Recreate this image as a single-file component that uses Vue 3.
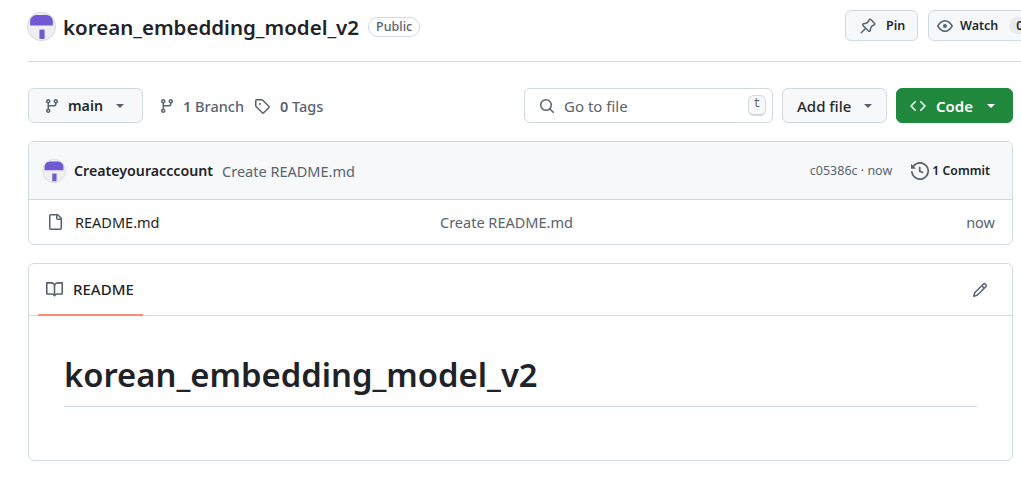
<script setup>
const title = 'korean_embedding_model_v2'

const icons = {
  pin: 'm11.294.984 3.722 3.722a1.75 1.75 0 0 1-.504 2.826l-1.327.613a3.089 3.089 0 0 0-1.707 2.084l-.584 2.454c-.317 1.332-1.972 1.8-2.94.832L5.75 11.311 1.78 15.28a.749.749 0 0 1-1.275-.326.749.749 0 0 1 .215-.734L4.69 10.25l-2.204-2.204c-.968-.968-.5-2.623.832-2.94l2.454-.584a3.08 3.08 0 0 0 2.084-1.707l.613-1.327a1.75 1.75 0 0 1 2.826-.504ZM6.283 9.723l2.732 2.731a.25.25 0 0 0 .42-.119l.584-2.454a4.586 4.586 0 0 1 2.537-3.098l1.328-.613a.25.25 0 0 0 .072-.404l-3.722-3.722a.25.25 0 0 0-.404.072l-.613 1.328a4.584 4.584 0 0 1-3.098 2.537l-2.454.584a.25.25 0 0 0-.119.42l2.731 2.732Z',
  eye: 'M8 2c1.981 0 3.671.992 4.933 2.078 1.27 1.091 2.187 2.345 2.637 3.023a1.62 1.62 0 0 1 0 1.798c-.45.678-1.367 1.932-2.637 3.023C11.67 13.008 9.981 14 8 14c-1.981 0-3.671-.992-4.933-2.078C1.797 10.83.88 9.576.43 8.898a1.62 1.62 0 0 1 0-1.798c.45-.677 1.367-1.931 2.637-3.022C4.33 2.992 6.019 2 8 2ZM1.679 7.932a.12.12 0 0 0 0 .136c.411.622 1.241 1.75 2.366 2.717C5.176 11.758 6.527 12.5 8 12.5c1.473 0 2.825-.742 3.955-1.715 1.124-.967 1.954-2.096 2.366-2.717a.12.12 0 0 0 0-.136c-.412-.621-1.242-1.75-2.366-2.717C10.824 4.242 9.473 3.5 8 3.5c-1.473 0-2.825.742-3.955 1.715-1.124.967-1.954 2.096-2.366 2.717ZM8 10a2 2 0 1 1-.001-3.999A2 2 0 0 1 8 10Z',
  branch: 'M9.5 3.25a2.25 2.25 0 1 1 3 2.122V6A2.5 2.5 0 0 1 10 8.5H6a1 1 0 0 0-1 1v1.128a2.251 2.251 0 1 1-1.5 0V5.372a2.25 2.25 0 1 1 1.5 0v1.836A2.493 2.493 0 0 1 6 7h4a1 1 0 0 0 1-1v-.628A2.25 2.25 0 0 1 9.5 3.25Zm-6 0a.75.75 0 1 0 1.5 0 .75.75 0 0 0-1.5 0Zm8.25-.75a.75.75 0 1 0 0 1.5.75.75 0 0 0 0-1.5ZM4.25 12a.75.75 0 1 0 0 1.5.75.75 0 0 0 0-1.5Z',
  tag: 'M1 7.775V2.75C1 1.784 1.784 1 2.75 1h5.025c.464 0 .91.184 1.238.513l6.25 6.25a1.75 1.75 0 0 1 0 2.474l-5.026 5.026a1.75 1.75 0 0 1-2.474 0l-6.25-6.25A1.752 1.752 0 0 1 1 7.775Zm1.5 0c0 .066.026.13.073.177l6.25 6.25a.25.25 0 0 0 .354 0l5.025-5.025a.25.25 0 0 0 0-.354l-6.25-6.25a.25.25 0 0 0-.177-.073H2.75a.25.25 0 0 0-.25.25ZM6 5a1 1 0 1 1 0 2 1 1 0 0 1 0-2Z',
  search: 'M10.68 11.74a6 6 0 0 1-7.922-8.982 6 6 0 0 1 8.982 7.922l3.04 3.04a.749.749 0 0 1-.326 1.275.749.749 0 0 1-.734-.215ZM11.5 7a4.499 4.499 0 1 0-8.997 0A4.499 4.499 0 0 0 11.5 7Z',
  code: 'm11.28 3.22 4.25 4.25a.75.75 0 0 1 0 1.06l-4.25 4.25a.749.749 0 0 1-1.275-.326.749.749 0 0 1 .215-.734L13.94 8l-3.72-3.72a.749.749 0 0 1 .326-1.275.749.749 0 0 1 .734.215Zm-6.56 0a.751.751 0 0 1 1.042.018.751.751 0 0 1 .018 1.042L2.06 8l3.72 3.72a.749.749 0 0 1-.326 1.275.749.749 0 0 1-.734-.215L.47 8.53a.75.75 0 0 1 0-1.06Z',
  history: 'm.427 1.927 1.215 1.215a8.002 8.002 0 1 1-1.6 5.685.75.75 0 1 1 1.493-.154 6.5 6.5 0 1 0 1.18-4.458l1.358 1.358A.25.25 0 0 1 3.896 6H.25A.25.25 0 0 1 0 5.75V2.104a.25.25 0 0 1 .427-.177ZM7.75 4a.75.75 0 0 1 .75.75v2.992l2.028.812a.75.75 0 0 1-.557 1.392l-2.5-1A.751.751 0 0 1 7 8.25v-3.5A.75.75 0 0 1 7.75 4Z',
  file: 'M2 1.75C2 .784 2.784 0 3.75 0h6.586c.464 0 .909.184 1.237.513l2.914 2.914c.329.328.513.773.513 1.237v9.586A1.75 1.75 0 0 1 13.25 16h-9.5A1.75 1.75 0 0 1 2 14.25Zm1.75-.25a.25.25 0 0 0-.25.25v12.5c0 .138.112.25.25.25h9.5a.25.25 0 0 0 .25-.25V6h-2.75A1.75 1.75 0 0 1 9 4.25V1.5Zm6.75.062V4.25c0 .138.112.25.25.25h2.688l-.011-.013-2.914-2.914-.013-.011Z',
  book: 'M0 1.75A.75.75 0 0 1 .75 1h4.253c1.227 0 2.317.59 3 1.501A3.743 3.743 0 0 1 11.006 1h4.245a.75.75 0 0 1 .75.75v10.5a.75.75 0 0 1-.75.75h-4.507a2.25 2.25 0 0 0-1.591.659l-.622.621a.75.75 0 0 1-1.06 0l-.622-.621A2.25 2.25 0 0 0 5.258 13H.75a.75.75 0 0 1-.75-.75Zm7.251 10.324.004-5.073-.002-2.253A2.25 2.25 0 0 0 5.003 2.5H1.5v9h3.757a3.75 3.75 0 0 1 1.994.574ZM8.755 4.75l-.004 7.322a3.752 3.752 0 0 1 1.992-.572H14.5v-9h-3.495a2.25 2.25 0 0 0-2.25 2.25Z',
  pencil: 'M11.013 1.427a1.75 1.75 0 0 1 2.474 0l1.086 1.086a1.75 1.75 0 0 1 0 2.474l-8.61 8.61c-.21.21-.47.364-.756.445l-3.251.93a.75.75 0 0 1-.927-.928l.929-3.25c.081-.286.235-.547.445-.758l8.61-8.61Zm.176 4.823L9.75 4.81l-6.286 6.287a.253.253 0 0 0-.064.108l-.558 1.953 1.953-.558a.253.253 0 0 0 .108-.064Zm1.238-3.763a.25.25 0 0 0-.354 0L10.811 3.75l1.439 1.44 1.263-1.263a.25.25 0 0 0 0-.354Z'
}
</script>

<template>
  <div class="page">
    <header class="repo-head">
      <div class="repo-name">
        <svg class="avatar big" viewBox="0 0 28 28">
          <circle cx="14" cy="14" r="13.5" fill="#eeeef3" stroke="#dcdce2" />
          <path d="M3 13V9.500C3 5.500 6 3 10 3h8c4 0 7 2.500 7 6.500V13z" fill="#7059d3" />
          <rect x="12" y="17" width="5" height="9" fill="#7059d3" />
        </svg>
        <strong>{{ title }}</strong>
        <span class="public">Public</span>
      </div>
      <div class="head-actions">
        <button class="btn small pin">
          <svg viewBox="0 0 16 16" width="16" height="16"><path :d="icons.pin" /></svg>
          Pin
        </button>
        <button class="btn small watch">
          <svg viewBox="0 0 16 16" width="16" height="16"><path :d="icons.eye" /></svg>
          Watch
          <span class="count">0</span>
        </button>
      </div>
    </header>

    <div class="toolbar">
      <button class="btn branch">
        <svg viewBox="0 0 16 16" width="16" height="16"><path :d="icons.branch" /></svg>
        <b>main</b>
        <i class="caret"></i>
      </button>
      <a class="meta first">
        <svg viewBox="0 0 16 16" width="16" height="16"><path :d="icons.branch" /></svg>
        <span><b>1</b> Branch</span>
      </a>
      <a class="meta tags">
        <svg viewBox="0 0 16 16" width="16" height="16"><path :d="icons.tag" /></svg>
        <span><b>0</b> Tags</span>
      </a>
      <div class="grow"></div>
      <label class="search">
        <svg viewBox="0 0 16 16" width="16" height="16"><path :d="icons.search" /></svg>
        <span>Go to file</span>
        <kbd>t</kbd>
      </label>
      <button class="btn add"><span>Add file</span> <i class="caret"></i></button>
      <button class="btn code">
        <svg viewBox="0 0 16 16" width="16" height="16"><path :d="icons.code" /></svg>
        <span>Code</span>
        <i class="caret white"></i>
      </button>
    </div>

    <section class="files">
      <div class="commit-row">
        <svg class="avatar small" viewBox="0 0 28 28">
          <circle cx="14" cy="14" r="13.5" fill="#eeeef3" stroke="#dcdce2" />
          <path d="M3 13V9.500C3 5.500 6 3 10 3h8c4 0 7 2.500 7 6.500V13z" fill="#7059d3" />
          <rect x="12" y="17" width="5" height="9" fill="#7059d3" />
        </svg>
        <strong>Createyouracccount</strong>
        <span class="msg">Create README.md</span>
        <div class="grow"></div>
        <span class="hash">c05386c · now</span>
        <span class="commits">
          <svg viewBox="0 0 16 16" width="18" height="18"><path :d="icons.history" /></svg>
          <b>1 Commit</b>
        </span>
      </div>
      <div class="file-row">
        <svg viewBox="0 0 16 16" width="16" height="16"><path :d="icons.file" /></svg>
        <span class="fname">README.md</span>
        <span class="fmsg">Create README.md</span>
        <span class="ftime">now</span>
      </div>
    </section>

    <section class="readme">
      <div class="readme-tabs">
        <div class="tab">
          <svg viewBox="0 0 16 16" width="17" height="17"><path :d="icons.book" /></svg>
          README
        </div>
        <svg class="pencil" viewBox="0 0 16 16" width="16" height="16"><path :d="icons.pencil" /></svg>
      </div>
      <div class="readme-body">
        <h1>{{ title }}</h1>
      </div>
    </section>
  </div>
</template>

<style>
html,
body {
  margin: 0;
  background: #fff;
  overflow: hidden;
}
</style>

<style scoped>
.page {
  width: 1021px;
  height: 477px;
  overflow: hidden;
  box-sizing: border-box;
  padding-left: 28px;
  font-family: "Noto Sans", "Open Sans", sans-serif;
  color: #1f2328;
  font-size: 14.5px;
}

svg {
  flex: none;
  fill: #59636e;
}

.grow {
  flex: 1;
}

.repo-head {
  height: 62px;
  box-sizing: border-box;
  border-bottom: 1px solid #d1d9e0;
  display: flex;
  align-items: flex-start;
  justify-content: space-between;
  padding-top: 10px;
}

.repo-name {
  display: flex;
  align-items: center;
  height: 33px;
  margin-left: -1px;
}

.repo-name strong {
  font-size: 20.5px;
  font-weight: 600;
  margin-left: 7px;
}

.public {
  border: 1px solid #d1d9e0;
  border-radius: 10px;
  font-size: 12.5px;
  font-weight: 500;
  color: #59636e;
  padding: 0 7px;
  line-height: 18px;
  margin-left: 9px;
}

.avatar.big {
  width: 29px;
  height: 29px;
}

.avatar.small {
  width: 24px;
  height: 24px;
  margin-right: 8px;
}

.head-actions {
  display: flex;
  gap: 10px;
  width: 176px;
  overflow: hidden;
  flex: none;
}

.btn {
  display: flex;
  align-items: center;
  flex: none;
  gap: 8px;
  box-sizing: border-box;
  border: 1px solid #d1d9e0;
  border-radius: 6px;
  background: #f6f8fa;
  color: #25292e;
  font-family: inherit;
  font-size: 15px;
  font-weight: 500;
  padding: 0 12px;
  white-space: nowrap;
}

.btn.small {
  height: 31px;
  font-size: 12.5px;
  font-weight: 600;
}

.btn.small.pin {
  width: 73px;
  padding: 0 14px;
  gap: 10px;
}

.btn.small.watch {
  gap: 7px;
  padding: 0 8px;
  width: 110px;
}

.count {
  background: #e6eaef;
  border-radius: 10px;
  padding: 0 7px;
  margin-left: 4px;
}

.toolbar {
  display: flex;
  align-items: center;
  height: 35px;
  margin-top: 26px;
  width: 985px;
}

.toolbar .btn {
  height: 35px;
}

.toolbar b {
  font-weight: 600;
}

.caret {
  display: inline-block;
  width: 0;
  height: 0;
  border-left: 4.500px solid transparent;
  border-right: 4.500px solid transparent;
  border-top: 4.500px solid #59636e;
}

.caret.white {
  border-top-color: #fff;
}

.btn.branch {
  width: 115px;
  padding: 0 0 0 15px;
  gap: 8px;
  font-size: 14.2px;
}

.btn.branch .caret {
  margin-left: 5px;
}

.meta {
  display: flex;
  align-items: center;
  gap: 8px;
  color: #59636e;
  white-space: nowrap;
}

.meta.first {
  margin-left: 16px;
}

.meta.tags {
  margin-left: 10px;
  gap: 10px;
}

.meta span {
  font-weight: 500;
}

.search {
  display: flex;
  align-items: center;
  box-sizing: border-box;
  width: 249px;
  height: 35px;
  border: 1px solid #d1d9e0;
  border-radius: 6px;
  padding: 0 6px 0 14px;
  gap: 9px;
  color: #59636e;
  font-size: 15px;
}

.search span {
  flex: 1;
}

kbd {
  box-sizing: border-box;
  width: 18px;
  height: 21px;
  text-align: center;
  border: 1px solid #d1d9e0;
  border-bottom-width: 2px;
  border-radius: 6px;
  background: #f6f8fa;
  font-family: "Liberation Mono", monospace;
  font-size: 12px;
  line-height: 17px;
}

.btn.add {
  width: 105px;
  margin-left: 9px;
  padding-left: 14px;
  gap: 13px;
}

.btn.code {
  width: 117px;
  margin-left: 9px;
  background: #1f883d;
  border-color: #1f883d;
  color: #fff;
  font-weight: 600;
  padding-left: 13px;
  gap: 10px;
}

.btn.code svg {
  fill: #fff;
}

.btn.code .caret {
  margin-left: 4px;
}

.files {
  width: 985px;
  margin-top: 18px;
  border: 1px solid #d1d9e0;
  border-radius: 6px;
  box-sizing: border-box;
  overflow: hidden;
}

.commit-row {
  height: 58px;
  background: #f6f8fa;
  border-bottom: 1px solid #d1d9e0;
  display: flex;
  align-items: center;
  padding: 0 16px 0 13px;
  box-sizing: border-box;
}

.commit-row strong {
  font-weight: 600;
  font-size: 14.2px;
  margin-right: 9px;
}

.msg {
  color: #59636e;
}

.hash {
  color: #59636e;
  font-size: 12.5px;
}

.commits {
  display: flex;
  align-items: center;
  gap: 3px;
  margin-left: 19px;
  font-size: 12.3px;
  padding-right: 6px;
}

.commits b {
  font-weight: 600;
}

.file-row {
  height: 44px;
  display: flex;
  align-items: center;
  padding: 0 17px 0 18px;
}

.fname {
  margin-left: 12px;
  width: 365px;
}

.fmsg {
  flex: 1;
  color: #59636e;
}

.ftime {
  color: #59636e;
}

.readme {
  width: 985px;
  height: 198px;
  margin-top: 18px;
  border: 1px solid #d1d9e0;
  border-radius: 6px;
  box-sizing: border-box;
}

.readme-tabs {
  height: 51px;
  border-bottom: 1px solid #d1d9e0;
  display: flex;
  align-items: stretch;
  justify-content: space-between;
  padding: 0 24px 0 9px;
}

.tab {
  display: flex;
  align-items: center;
  gap: 10px;
  padding: 0 8px;
  width: 105px;
  box-sizing: border-box;
  font-size: 15px;
  font-weight: 500;
  border-bottom: 2px solid #fd8c73;
  margin-bottom: -1px;
}

.pencil {
  align-self: center;
}

.readme-body {
  padding: 37px 35px 0;
}

h1 {
  margin: 0;
  font-size: 32.8px;
  font-weight: 600;
  line-height: 44px;
  padding-bottom: 9px;
  border-bottom: 1px solid #d1d9e0;
}
</style>
